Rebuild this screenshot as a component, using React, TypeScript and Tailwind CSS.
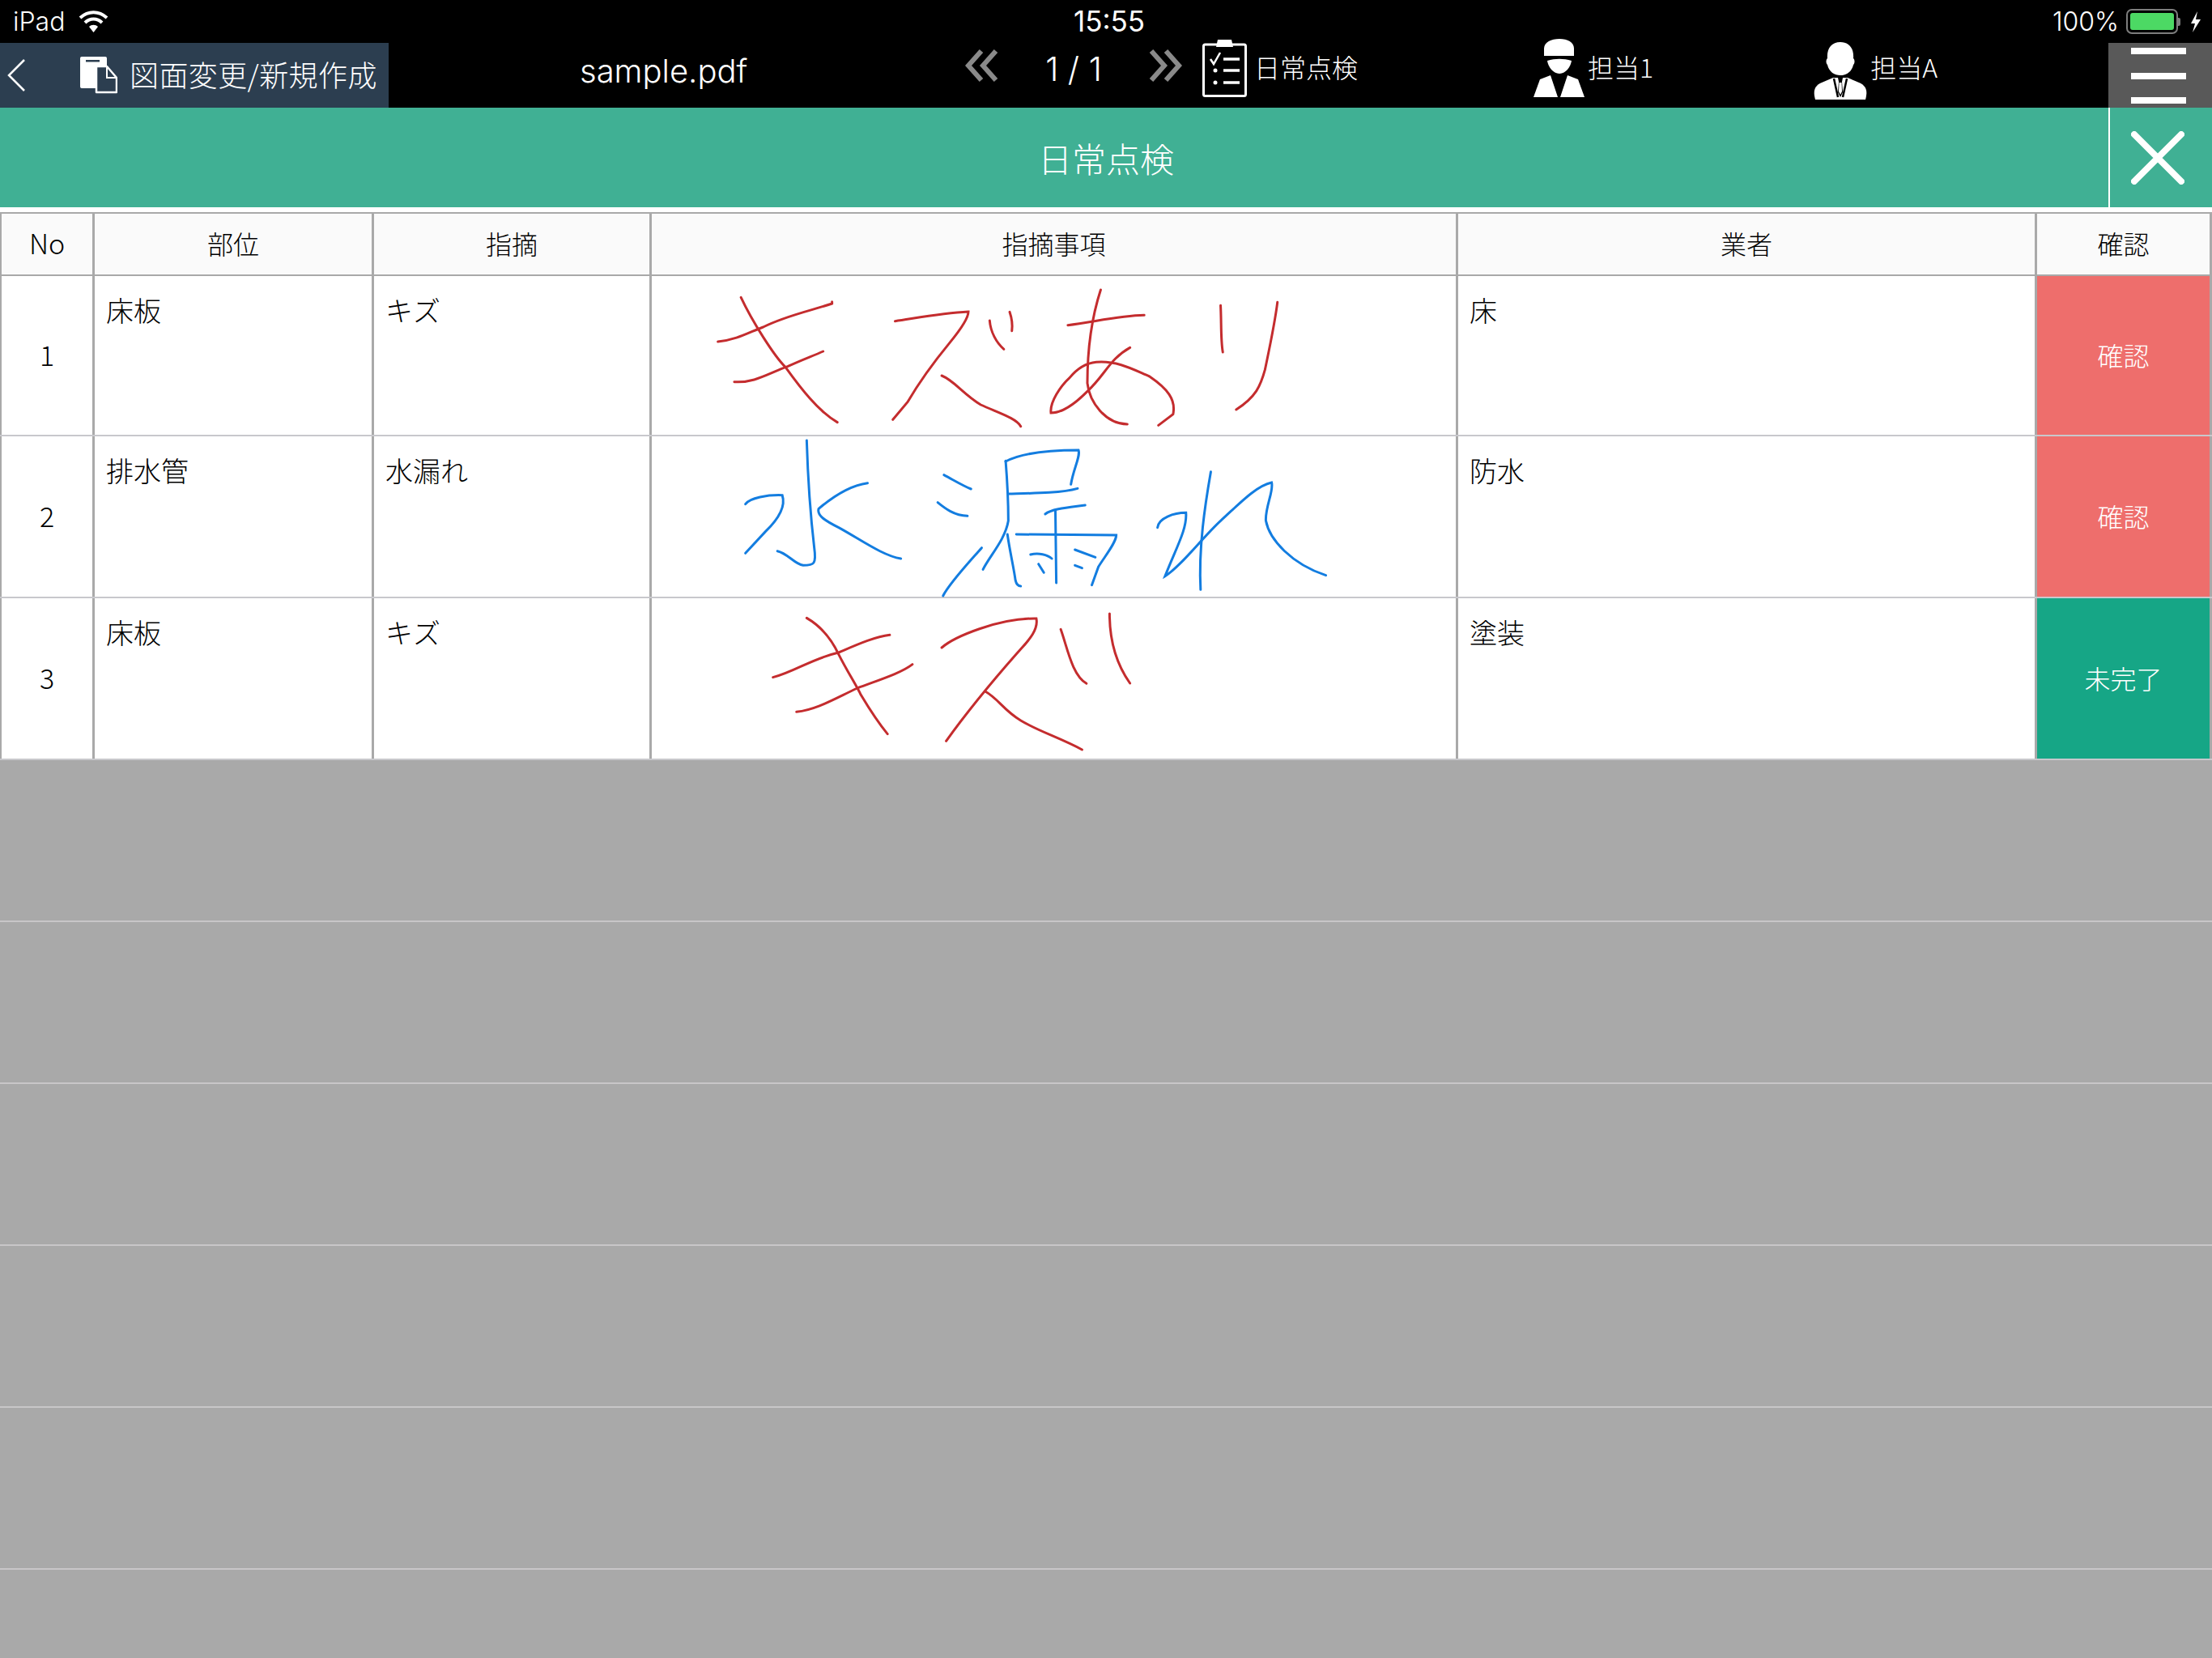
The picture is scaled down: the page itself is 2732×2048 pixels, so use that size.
const cols = "grid grid-cols-[117px_345px_343px_996px_715px_216px]";
const cellLine = "border-r-[3px] border-[#a9a9a9]";

const rows = [
  {
    no: "1",
    part: "床板",
    issue: "キズ",
    vendor: "床",
    action: "確認",
    actionBg: "bg-[#ee6e6c]",
    height: "h-[198px]",
    inkColor: "#c42c2e",
    inkPos: "left-[-5px] top-[-11px]",
    ink: [
      "M210 112C235 200 285 330 310 370C345 450 385 535 427 575",
      "M158 276C200 270 230 240 260 222C310 180 370 160 415 135L415 128",
      "M195 425C240 430 270 395 315 368C345 345 370 330 395 312",
      "M557 200C600 190 660 170 722 165C722 190 700 240 680 280C640 360 610 430 585 500L552 565",
      "M662 402C690 420 710 470 750 510C790 540 830 560 840 590",
      "M770 198C772 240 785 280 802 304",
      "M815 166C820 190 822 210 820 236",
      "M946 215C1000 205 1060 180 1118 178",
      "M1020 84C1005 160 990 270 990 430C995 500 1030 580 1080 582",
      "M1086 298C1040 340 1030 400 990 460C960 510 930 540 908 540C905 500 930 440 950 410C970 370 990 355 1010 352C1060 345 1100 385 1130 405C1170 450 1190 490 1183 545L1150 586",
      "M1290 142C1292 200 1290 270 1295 315",
      "M1418 130C1412 210 1400 300 1390 380C1380 440 1370 480 1325 528",
    ],
  },
  {
    no: "2",
    part: "排水管",
    issue: "水漏れ",
    vendor: "防水",
    action: "確認",
    actionBg: "bg-[#ee6e6c]",
    height: "h-[200px]",
    inkColor: "#137de0",
    inkPos: "left-[-5px] top-[-9px]",
    ink: [
      "M358 42C360 150 365 300 375 440C380 500 375 505 350 505C330 500 315 460 292 452",
      "M220 278C230 255 270 243 303 245C312 290 290 340 265 380L220 460",
      "M495 200C450 210 410 260 385 295C380 320 400 340 430 365C480 410 530 470 570 480",
      "M667 170C690 190 710 210 728 222",
      "M653 272C670 295 690 320 720 322",
      "M665 618C680 570 720 500 752 440",
      "M806 120C835 95 880 78 970 78C975 100 958 150 953 205",
      "M806 118C810 200 812 280 812 340C805 410 770 470 755 520",
      "M812 240C860 238 930 238 968 220",
      "M895 315C910 295 950 290 985 282",
      "M830 390L1055 393C1055 420 1030 470 1015 510L1000 578",
      "M810 390C815 450 825 520 828 560C830 575 835 582 840 582",
      "M918 300L920 570",
      "M862 465C880 458 900 465 910 480",
      "M880 500L892 532",
      "M962 447L1008 475",
      "M962 505L978 515",
      "M1268 158C1255 280 1240 440 1245 595",
      "M1148 365C1150 330 1185 310 1212 310C1215 370 1190 440 1165 545C1200 510 1250 400 1290 340C1330 280 1370 210 1405 198C1410 230 1390 290 1392 340C1400 410 1450 500 1527 542",
    ],
  },
  {
    no: "3",
    part: "床板",
    issue: "キズ",
    vendor: "塗装",
    action: "未完了",
    actionBg: "bg-[#16a686]",
    height: "h-[200px]",
    inkColor: "#c42c2e",
    inkPos: "left-[-5px] top-[-9px]",
    ink: [
      "M358 100C400 140 420 200 430 235C450 300 470 350 480 385C500 440 520 490 540 530",
      "M282 320C330 300 370 250 430 228C470 200 510 170 545 163",
      "M335 448C380 440 420 400 472 360C520 330 570 305 596 272",
      "M662 210C690 170 790 100 875 102C880 140 860 180 840 215C800 290 740 400 672 556",
      "M760 372C790 400 800 440 840 480C880 520 930 545 978 588",
      "M930 142C945 210 955 310 988 343",
      "M1040 84C1040 180 1055 270 1086 342",
    ],
  },
];

function Wifi() {
  return (
    <svg width="37" height="27" viewBox="0 0 37 27" fill="none">
      <path d="M2 9C12 0 25 0 35 9" stroke="white" strokeWidth="4" />
      <path d="M8 15C14 9 23 9 29 15" stroke="white" strokeWidth="4" />
      <path d="M13 20C16 17 21 17 24 20L18.5 27Z" fill="white" />
    </svg>
  );
}

function StatusBar() {
  return (
    <div className="h-[53px] grid grid-cols-3 items-center bg-black text-white text-[32px] font-light font-['Inter',sans-serif]">
      <div className="flex items-center gap-[17px] pl-[16px]">
        <span className="leading-none">iPad</span>
        <Wifi />
      </div>
      <div className="text-center pl-[8px] leading-none text-[35px] font-normal">15:55</div>
      <div className="flex items-center justify-end pr-[13px]">
        <span className="leading-none mr-[9px]">100%</span>
        <div className="w-[64px] h-[31px] rounded-[7px] border-2 border-[#7d7d7d] p-[3px]">
          <div className="w-full h-full rounded-[3px] bg-[#4cd964]" />
        </div>
        <div className="w-[3px] h-[10px] bg-[#7d7d7d] rounded-r-[2px] mr-[11px]" />
        <svg width="15" height="26" viewBox="0 0 15 26" fill="white">
          <polygon points="10,0 2,15 7,15 4,26 14,10 8,10" />
        </svg>
      </div>
    </div>
  );
}

function DocIcon() {
  return (
    <svg width="46" height="46" viewBox="0 0 46 46">
      <rect x="0" y="0" width="33" height="39" rx="2" fill="white" />
      <rect x="7" y="4" width="17" height="2.5" fill="#2c3e50" />
      <path d="M20 12H33L45 26V44H20Z" fill="#2c3e50" stroke="white" strokeWidth="2.5" strokeLinejoin="round" />
      <path d="M33 12V26H45" fill="none" stroke="white" strokeWidth="2" />
    </svg>
  );
}

function Chevrons({ flip }: { flip?: boolean }) {
  return (
    <svg width="41" height="40" viewBox="0 0 41 40" fill="none" stroke="#8a8a8a" strokeWidth="6" className={flip ? "-scale-x-100" : ""}>
      <polyline points="20,2 4,20 20,38" />
      <polyline points="38,2 22,20 38,38" />
    </svg>
  );
}

function ClipboardIcon() {
  return (
    <svg width="55" height="72" viewBox="0 0 55 72" fill="none">
      <rect x="1.5" y="7" width="52" height="63.5" rx="2" stroke="white" strokeWidth="3" />
      <path d="M17 10L19 1H36L38 10Z" fill="white" />
      <path d="M10 25L14 31L22 17" stroke="white" strokeWidth="2.5" />
      <path d="M26 25H46M26 39H46M26 54H46" stroke="white" strokeWidth="3.5" />
      <circle cx="16" cy="39" r="2.5" fill="white" />
      <circle cx="16" cy="54" r="2.5" fill="white" />
    </svg>
  );
}

function WorkerIcon() {
  return (
    <svg width="63" height="72" viewBox="0 0 63 72" fill="white">
      <path d="M13 21V12C13 4 22 0 32 0C42 0 50 4 50 12V21Z" />
      <path d="M17 27C27 24 37 24 47 27C46 34 40 43 32 43C24 43 18 34 17 27Z" />
      <path d="M0 72L8 50L21 45L30 72Z" />
      <path d="M63 72L55 50L42 45L33 72Z" />
    </svg>
  );
}

function SuitIcon() {
  return (
    <svg width="66" height="71" viewBox="0 0 66 71">
      <path
        d="M17 20C16 8 22 0 33 0C44 0 50 8 49 20C51 22 51 26 49 28C47 37 40 41 33 41C26 41 19 37 17 28C15 26 15 22 17 20Z"
        fill="white"
      />
      <path d="M2 71C-1 60 1 54 10 50L24 44H42L56 50C65 54 67 60 64 71Z" fill="white" />
      <path d="M25 45L30 68M41 45L36 68" stroke="black" strokeWidth="2.5" />
      <path d="M30 44H36L35 49L36 62L33 68L30 62L31 49Z" fill="black" />
      <path d="M31.5 50H34.5L35 61L33 65L31 61Z" fill="white" />
    </svg>
  );
}

function HeaderBar() {
  return (
    <div className="h-[80px] flex bg-black text-white">
      <div className="w-[480px] flex items-center bg-[#2c3e50]">
        <svg width="22" height="40" viewBox="0 0 22 40" fill="none" stroke="white" strokeWidth="2.5" className="ml-[9px]">
          <polyline points="21,1 2,20 21,39" />
        </svg>
        <div className="ml-[68px]">
          <DocIcon />
        </div>
        <span className="ml-[15px] mb-[5px] text-[36px] leading-none tracking-[0.4px] whitespace-nowrap font-light">図面変更/新規作成</span>
      </div>
      <div className="w-[712px] pl-[236px] pt-[11px] text-[40px] leading-[48px] font-['Inter',sans-serif] font-light">sample.pdf</div>
      <div className="flex items-start pt-[8px]">
        <Chevrons />
        <span className="w-[186px] text-center text-[41px] leading-[48px] pl-[1px] pr-[1px] font-['Inter',sans-serif] font-light">1 / 1</span>
        <Chevrons flip />
      </div>
      <div className="flex items-start ml-[25px] mt-[-5px]">
        <ClipboardIcon />
        <span className="ml-[9px] mt-[18px] text-[32px] leading-[32px] font-light whitespace-nowrap">日常点検</span>
      </div>
      <div className="flex items-start ml-[217px] mt-[-5px]">
        <WorkerIcon />
        <span className="ml-[4px] mt-[18px] text-[32px] leading-[32px] font-light whitespace-nowrap">担当1</span>
      </div>
      <div className="flex items-start ml-[198px] mt-[-1px]">
        <SuitIcon />
        <span className="ml-[4px] mt-[14px] text-[32px] leading-[32px] font-light whitespace-nowrap">担当A</span>
      </div>
      <div className="ml-auto w-[128px] bg-[#595959] flex flex-col items-center justify-between pt-[6px] pb-[5px] pr-[4px]">
        <div className="w-[68px] h-[8px] bg-white" />
        <div className="w-[68px] h-[8px] bg-white" />
        <div className="w-[68px] h-[8px] bg-white" />
      </div>
    </div>
  );
}

function TitleBar() {
  return (
    <div className="h-[123px] flex bg-[#40b094] text-white">
      <div className="flex-1 flex items-center justify-center pl-[128px] text-[42px] font-light">日常点検</div>
      <div className="w-[128px] border-l-2 border-white flex items-center justify-center pr-[8px]">
        <svg width="66" height="66" viewBox="0 0 66 66" fill="none" stroke="white" strokeWidth="8" strokeLinecap="round">
          <path d="M4 4L62 62M62 4L4 62" />
        </svg>
      </div>
    </div>
  );
}

function Ink({ paths, color, pos }: { paths: string[]; color: string; pos: string }) {
  return (
    <svg
      width="860"
      height="210"
      viewBox="0 0 1568 630"
      preserveAspectRatio="none"
      fill="none"
      className={`absolute z-10 overflow-visible ${pos}`}
    >
      {paths.map((d, i) => (
        <path key={i} d={d} stroke={color} strokeWidth="3" strokeLinecap="round" vectorEffect="non-scaling-stroke" />
      ))}
    </svg>
  );
}

function Table() {
  const head = ["部位", "指摘", "指摘事項", "業者"];
  return (
    <div className="text-black font-light">
      <div className={`${cols} h-[79px] border-t-2 border-b-2 border-[#a9a9a9] bg-[#fafafa] text-[32px]`}>
        <div className={`${cellLine} border-l-2 flex items-center justify-center text-[34px] pb-[4px]`}>No</div>
        {head.map((h) => (
          <div key={h} className={`${cellLine} flex items-center justify-center pb-[4px]`}>
            {h}
          </div>
        ))}
        <div className={`${cellLine} flex items-center justify-center pb-[4px]`}>確認</div>
      </div>
      {rows.map((r) => (
        <div key={r.no} className={`${cols} ${r.height} border-b-2 border-[#c8c8cc] bg-white text-[34px]`}>
          <div className={`${cellLine} border-l-2 flex items-center justify-center pb-[3px]`}>{r.no}</div>
          <div className={`${cellLine} pl-[14px] pt-[25px] leading-[34px]`}>{r.part}</div>
          <div className={`${cellLine} pl-[14px] pt-[25px] leading-[34px]`}>{r.issue}</div>
          <div className={`${cellLine} relative`}>
            <Ink paths={r.ink} color={r.inkColor} pos={r.inkPos} />
          </div>
          <div className={`${cellLine} pl-[14px] pt-[25px] leading-[34px]`}>{r.vendor}</div>
          <div className={`${cellLine} ${r.actionBg} flex items-center justify-center text-white text-[32px] pb-[2px]`}>{r.action}</div>
        </div>
      ))}
    </div>
  );
}

export default function App() {
  return (
    <div className="w-[2732px] h-[2048px] overflow-hidden bg-[#a9a9a9] font-['Noto_Sans_CJK_JP',sans-serif]">
      <StatusBar />
      <HeaderBar />
      <TitleBar />
      <div className="h-[6px] bg-white" />
      <Table />
      {[0, 1, 2, 3, 4].map((i) => (
        <div key={i} className="h-[200px] border-b-2 border-[#c8c6c8]" />
      ))}
    </div>
  );
}
